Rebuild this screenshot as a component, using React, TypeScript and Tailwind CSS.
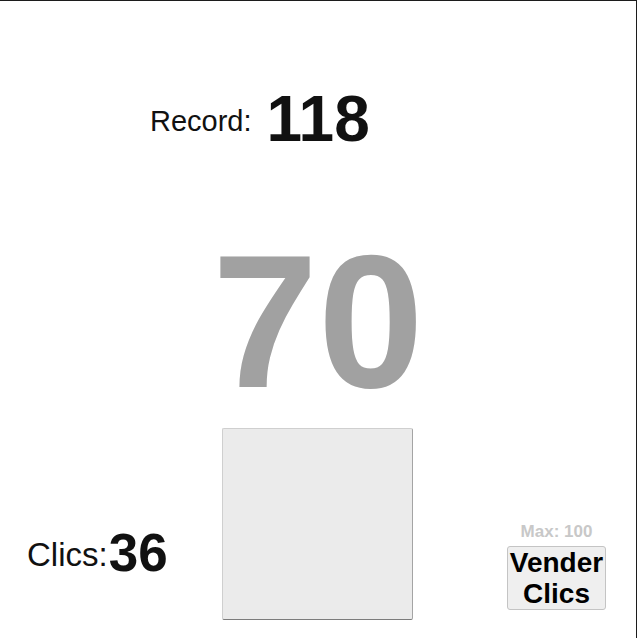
export default function App() {
  const record = 118;
  const score = 70;
  const clicks = 36;
  const max = 100;

  return (
    <div className="w-[637px] h-[638px] bg-white border-t border-r border-[#1c1c1c] overflow-hidden font-['Liberation_Sans',Arial,sans-serif] text-[#111]">
      {/* record */}
      <div className="mt-[86px] pl-[150px] flex items-start">
        <span className="mt-[20px] text-[29px] leading-none">Record:</span>
        <span className="ml-[15px] text-[64px] leading-none font-bold">{record}</span>
      </div>

      {/* current count */}
      <div className="mt-[75px] text-center text-[190px] leading-none font-bold text-[#a1a1a1]">
        {score}
      </div>

      {/* bottom row */}
      <div className="mt-[12px] flex items-start">
        <div className="w-[222px] pl-[27px] pt-[98px] flex items-start">
          <span className="mt-[12px] text-[33px] leading-none">Clics:</span>
          <span className="ml-[1px] text-[53px] leading-none font-bold">{clicks}</span>
        </div>

        <button className="w-[191px] h-[192px] bg-[#ebebeb] border border-[#cfcfcf] border-r-[#a4a4a4] border-b-[#7c7c7c] rounded-[2px]" />

        <div className="ml-[94px] pt-[95px] w-[99px] flex flex-col items-center">
          <span className="text-[17px] leading-none font-bold text-[#c8c8c8]">Max: {max}</span>
          <button className="mt-[6px] w-[99px] bg-[#efefef] border border-[#c4c4c4] rounded-[3px] text-[28px] leading-[31px] font-bold text-black">
            Vender
            <br />
            Clics
          </button>
        </div>
      </div>
    </div>
  );
}
